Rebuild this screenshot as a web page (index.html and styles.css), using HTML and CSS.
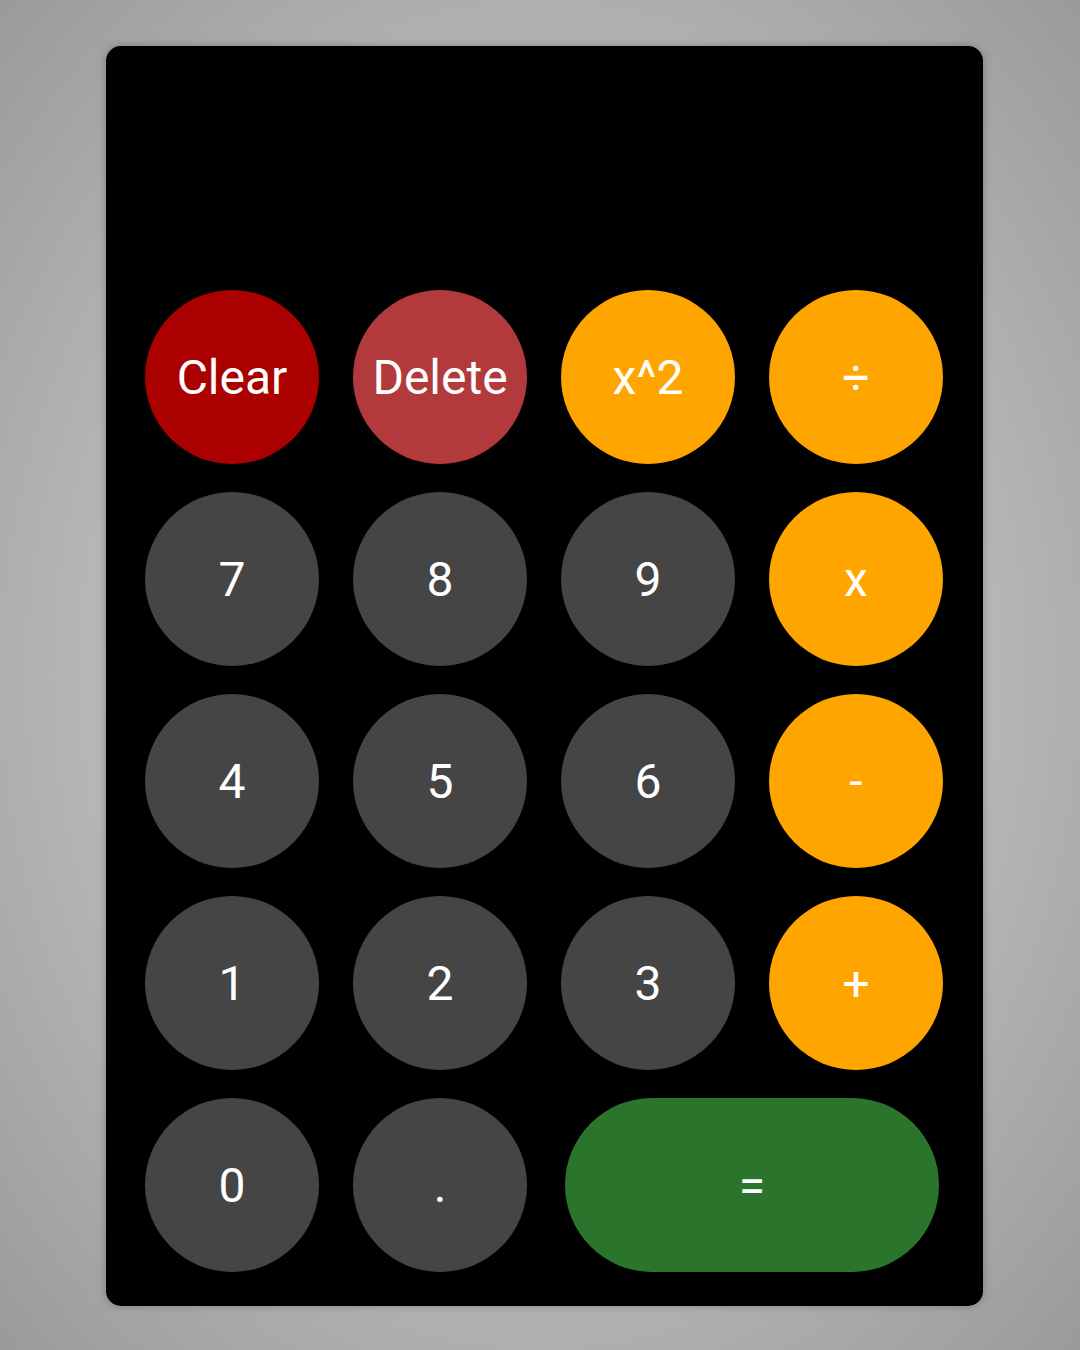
FILE: index.html
```html
<!DOCTYPE html>
<html lang="en">
<head>
<meta charset="utf-8">
<title>Calculator</title>
<link rel="stylesheet" href="styles.css">
</head>
<body>
<div class="page">
  <div class="calculator">
    <div class="display"></div>
    <div class="keys">
      <button class="key clear">Clear</button>
      <button class="key delete">Delete</button>
      <button class="key op">x^2</button>
      <button class="key op">÷</button>
      <button class="key num">7</button>
      <button class="key num">8</button>
      <button class="key num">9</button>
      <button class="key op">x</button>
      <button class="key num">4</button>
      <button class="key num">5</button>
      <button class="key num">6</button>
      <button class="key op">-</button>
      <button class="key num">1</button>
      <button class="key num">2</button>
      <button class="key num">3</button>
      <button class="key op">+</button>
      <button class="key num">0</button>
      <button class="key num">.</button>
      <button class="key equals">=</button>
    </div>
  </div>
</div>
</body>
</html>
```
FILE: styles.css
```css
html, body {
  margin: 0;
  padding: 0;
}
body {
  width: 1080px;
  height: 1350px;
  overflow: hidden;
  background: radial-gradient(ellipse at 50% 50%, #cbcbcb 0%, #c0c0c0 45%, #9a9a9a 100%);
  font-family: Roboto, "Liberation Sans", sans-serif;
}
.page {
  padding: 46px 0 0 106px;
}
.calculator {
  width: 877px;
  height: 1260px;
  box-sizing: border-box;
  background: #000;
  border-radius: 15px;
  box-shadow: 0 0 8px rgba(0, 0, 0, 0.25);
  padding: 0 40px 34px 39px;
  display: flex;
  flex-direction: column;
}
.display {
  height: 244px;
  flex: none;
}
.keys {
  display: grid;
  grid-template-columns: repeat(4, 174px);
  grid-auto-rows: 174px;
  column-gap: 34px;
  row-gap: 28px;
}
.key {
  width: 174px;
  height: 174px;
  border: none;
  border-radius: 50%;
  color: #fff;
  font-family: Roboto, "Liberation Sans", sans-serif;
  font-size: 48px;
  padding: 0;
  margin: 0;
  display: flex;
  align-items: center;
  justify-content: center;
}
.clear { background: #aa0000; }
.delete { background: #b23a3c; }
.op { background: #ffa500; }
.num { background: #454545; }
.equals {
  grid-column: 3 / span 2;
  justify-self: center;
  width: 374px;
  border-radius: 87px;
  background: #2b742b;
}
```
